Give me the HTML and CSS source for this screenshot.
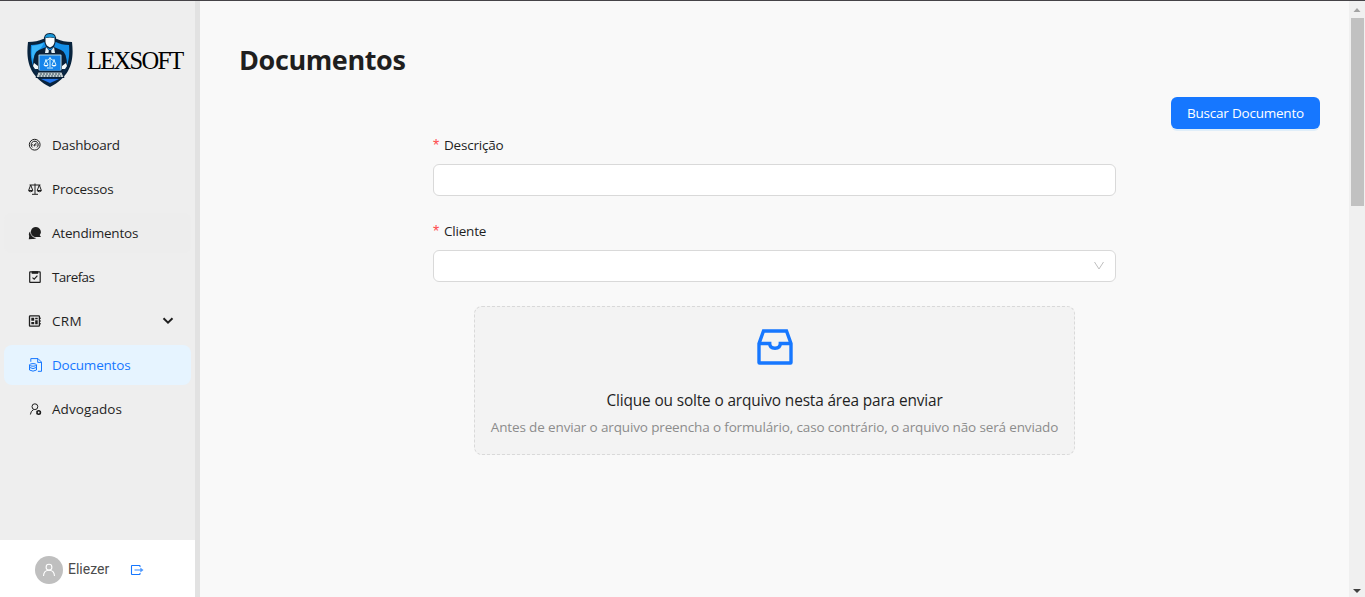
FILE: index.html
```
<!DOCTYPE html>
<html lang="pt-BR">
<head>
<meta charset="utf-8">
<title>Lexsoft - Documentos</title>
<link rel="stylesheet" href="styles.css">
</head>
<body>
<div class="app">
  <aside class="sidebar">
    <div class="brand">
      <svg class="brand-logo" viewBox="0 0 46 54">
        <path d="M1 9Q10 9 16 6L30 6Q36 9 45 9C47 26 45 43 23 54C1 43 -1 26 1 9Z" fill="#08233d"/>
        <path d="M4 12Q12 12 17 9L29 9Q34 12 42 12C43 25 42 41 23 50C4 41 3 25 4 12Z" fill="#138ee8"/>
        <path d="M5 13Q12 12 17 10L14 15L8 20L6 29Q4 21 5 13Z" fill="#39b6fa"/>
        <path d="M5 34L41 34Q36 46 23 51Q10 46 5 34Z" fill="#0b2948"/>
        <path d="M14 46H32L23 50Z" fill="#2376ed"/>
        <path d="M6 33Q6 19 12 17L19 14L23 18L27 14L34 17Q40 19 40 33L34 38H12Z" fill="#0a2038"/>
        <path d="M19 14L23 19L27 14L28 20H18Z" fill="#e6f2f8"/>
        <path d="M22 17H24L25 22H21Z" fill="#0a2038"/>
        <path d="M17 8Q16 0 23 0Q30 0 29 8L27 14L23 16L19 14Z" fill="#0a2038"/>
        <path d="M18.500 5Q23 4 27.500 5V9Q27 13 23 14.500Q19 13 18.500 9Z" fill="#f7fbfd"/>
        <path d="M18 5Q18 1 23 1Q28 1 28 5Q23 3 18 5Z" fill="#1997d8"/>
        <rect x="10" y="20" width="26" height="19" rx="2" fill="#0a2038"/>
        <rect x="11.500" y="21.500" width="23" height="16" rx="1" fill="#b2d8e9"/>
        <rect x="12.500" y="22.500" width="21" height="15" fill="#1684ea"/>
        <path d="M23 24V34M18 27Q21 28 23 25Q25 28 28 27M19 27L17 32M19 27L21 32M27 27L25 32M27 27L29 32M20 35H26" fill="none" stroke="#d6f4ff" stroke-width="1"/>
        <path d="M16.500 32H21.500Q19 35 16.500 32ZM24.500 32H29.500Q27 35 24.500 32Z" fill="#fff"/>
        <path d="M7 30L11 33L11 36L8 36L6 33ZM39 30L35 33V36H38L40 33Z" fill="#f4f8f9"/>
        <path d="M11 39H35L37 44.500H9Z" fill="#c4cfd2" stroke="#0a2038"/>
        <path d="M13 41H33M12 43H34" stroke="#344c5b" stroke-dasharray="2 1"/>
      </svg>
      <span class="brand-name">LEXSOFT</span>
    </div>
    <nav class="menu">
      <a class="item"><svg class="icon" viewBox="0 0 14 14"><circle cx="6.700" cy="6.700" r="5.400"/><path d="M4.500 9.400A3.500 3.500 0 1 1 8.900 9.400M6.500 7.300L8.300 4.900M4.200 6.800H5M6.700 3.300V4M8.600 7H9.300"/><circle cx="6.500" cy="7.300" r=".6"/></svg><span class="text">Dashboard</span></a>
      <a class="item"><svg class="icon" viewBox="0 0 14 14"><path d="M1.500 3H12.500M7 1.500V12M4 12.300H10M2.700 3L.6 8.500H4.800ZM11.300 3L9.200 8.500H13.400ZM.7 9Q2.700 10.500 4.700 9M9.300 9Q11.300 10.500 13.300 9"/></svg><span class="text">Processos</span></a>
      <a class="item hovered"><svg class="icon solid" viewBox="0 0 14 14"><path d="M8 1A5 5 0 1 1 5.500 10.400A5 5 0 0 1 8 1ZM11 8L13 11H8ZM2.200 5.500A6 6 0 0 0 8.300 11.900A4.200 4.200 0 0 1 4.500 12.900L.8 13.200L1.200 10A4 4 0 0 1 2.200 5.500Z"/></svg><span class="text">Atendimentos</span></a>
      <a class="item"><svg class="icon" viewBox="0 0 14 14"><rect x="1.700" y="1.900" width="10.500" height="10.500" rx=".5" stroke-width="1.200"/><path d="M3.700 2.500H10.200" stroke-width="2.600"/><path d="M4.500 7.600L6.200 9.100L9.400 5.700" stroke-width="1.200"/></svg><span class="text tight">Tarefas</span></a>
      <a class="item"><svg class="icon" viewBox="0 0 14 14"><rect x="1.500" y="1.900" width="9.900" height="10.300" rx=".7" stroke-width="1.300"/><path d="M11.500 4.200H13M11.500 7H13M11.500 9.800H13"/><path d="M3.300 3.800H6.200V6.800H3.300ZM7.200 3.800H9.700V5.300H7.200ZM3.300 7.900H6.200V10.200H3.300ZM7.200 6.300H9.700V10.200H7.200Z" fill="currentColor" stroke="none"/></svg><span class="text wide">CRM</span>
        <svg class="caret" viewBox="0 0 12 12"><path d="M1.500 3.200L6 7.600L10.500 3.200"/></svg></a>
      <a class="item active"><svg class="icon" viewBox="0 0 14 14"><path d="M2.800 3.800V.6H10L13.500 4.100V13.300H9.900M9.700 .6V4.400H13.500"/><ellipse cx="5" cy="6.900" rx="3.500" ry="1.300"/><path d="M1.500 7V12Q5 14.300 8.500 12V7M1.500 9.400Q5 11.800 8.500 9.400"/></svg><span class="text">Documentos</span></a>
      <a class="item"><svg class="icon" viewBox="0 0 14 14"><circle cx="6.900" cy="4.700" r="2.900"/><path d="M2.400 12.500Q2.700 9 5.600 7.600"/><circle cx="10.700" cy="10.500" r="1.700" stroke-width="1.600"/><path d="M10.700 8V9M10.700 12V13M8.500 9.300L9.400 9.800M12 11.200L12.900 11.700M12.900 9.300L12 9.800M9.400 11.200L8.500 11.700"/></svg><span class="text loose">Advogados</span></a>
    </nav>
    <div class="user">
      <span class="avatar"><svg viewBox="0 0 14 14"><circle cx="7" cy="4.200" r="2.900"/><path d="M1.500 13Q1.800 7.200 7 7.200Q12.200 7.200 12.500 13"/></svg></span>
      <span class="user-name">Eliezer</span>
      <svg class="logout" viewBox="0 0 14 14"><path d="M10 4V3Q10 2.500 9.500 2.500H2Q1.500 2.500 1.500 3V11Q1.500 11.500 2 11.500H9.500Q10 11.500 10 11V10"/><path d="M4.500 7H11" opacity=".8"/><path d="M10.300 4.500L13.500 7L10.300 9.500Z" class="tip"/></svg>
    </div>
  </aside>
  <main class="content">
    <h1 class="title">Documentos</h1>
    <div class="toolbar"><button class="primary">Buscar Documento</button></div>
    <form class="form">
      <label class="label"><span class="required">*</span><span class="text">Descrição</span></label>
      <div class="field"></div>
      <label class="label second"><span class="required">*</span><span class="text">Cliente</span></label>
      <div class="field select"><svg viewBox="0 0 12 12"><path d="M1.500 2L6 9L10.500 2"/></svg></div>
      <div class="dropzone">
        <svg class="inbox" viewBox="0 0 36 36"><path d="M2 14.500L6.500 2H29.500L34 14.500V33.500Q34 34 33.500 34H2.500Q2 34 2 33.500ZM2 14.500H12.700Q12.700 19.200 18 19.200Q23.300 19.200 23.300 14.500H34"/></svg>
        <p class="drop-text">Clique ou solte o arquivo nesta área para enviar</p>
        <p class="drop-hint">Antes de enviar o arquivo preencha o formulário, caso contrário, o arquivo não será enviado</p>
      </div>
    </form>
  </main>
  <div class="scrollbar">
    <svg class="arrow dim" viewBox="0 0 16 16"><path d="M4.500 11H11.500L8 7Z"/></svg>
    <div class="thumb"></div>
    <svg class="arrow bottom" viewBox="0 0 16 16"><path d="M4 8H12L8 12Z"/></svg>
  </div>
</div>
</body>
</html>
```
FILE: styles.css
```
* { box-sizing: border-box; }
body { margin: 0; overflow: hidden; font-family: "Open Sans", "Noto Sans", sans-serif; font-size: 13.5px; color: #1f1f1f; }
.app { display: flex; height: 597px; border-top: 1px solid #454347; background: #f9f9f9; }
.sidebar { display: flex; flex-direction: column; width: 200px; flex: none; background: #eeeeee; border-right: 5px solid #e2e2e2; }
.brand { display: flex; align-items: center; height: 120px; padding-left: 27px; gap: 14px; }
.brand-logo { width: 46px; height: 54px; flex: none; margin-bottom: 2px; }
.brand-name { font-family: "Liberation Serif", serif; font-size: 24.5px; letter-spacing: -1.7px; color: #000; white-space: nowrap; }
.menu { display: flex; flex-direction: column; gap: 4px; padding: 4px 4px 0; }
.item { display: flex; align-items: center; width: 187px; height: 40px; padding: 0 17px 0 24px; gap: 10px; border-radius: 8px; }
.text { padding-bottom: 1px; letter-spacing: -.2px; }
.tight { letter-spacing: -.6px; }
.wide { letter-spacing: .3px; }
.loose { letter-spacing: .08px; }
.icon { width: 14px; height: 14px; flex: none; fill: none; stroke: currentColor; stroke-width: 1; }
.icon.solid { fill: currentColor; stroke: none; }
.hovered { background: #ededed; }
.active { color: #1677ff; background: #e6f4ff; }
.caret { width: 12px; height: 12px; margin-left: auto; fill: none; stroke: #1f1f1f; stroke-width: 2; }
.user { display: flex; align-items: center; height: 57px; margin-top: auto; padding: 2px 0 0 35px; background: #fff; }
.avatar { display: flex; align-items: center; justify-content: center; width: 28px; height: 28px; border-radius: 50%; background: #bfbfbf; }
.avatar svg { width: 14px; height: 14px; fill: none; stroke: #fff; stroke-width: 1.1; }
.user-name { margin-left: 5px; width: 62px; padding-bottom: 2px; font-family: Roboto, sans-serif; font-size: 14px; color: #4b4b4b; }
.logout { width: 14px; height: 14px; fill: none; stroke: #1677ff; stroke-width: 1.1; }
.logout .tip { fill: #4c98ff; stroke: none; }
.content { flex: 1; padding: 39px 29px 0 39px; }
.title { margin: 0; height: 40px; line-height: 40px; font-size: 27px; font-weight: 700; letter-spacing: -.4px; }
.toolbar { display: flex; justify-content: flex-end; margin-top: 17px; }
.primary { width: 149px; height: 32px; padding: 0 0 1px; border: 0; border-radius: 6px; background: #1677ff; box-shadow: 0 2px 0 rgba(5, 145, 255, .1); color: #fff; font: inherit; letter-spacing: -.22px; white-space: nowrap; }
.form { width: 683px; margin-left: 194px; padding-top: 5px; }
.label { display: flex; align-items: center; height: 22px; gap: 4px; }
.label.second { margin-top: 24px; }
.required { width: 7px; padding-top: 2px; color: #ff4d4f; font-family: "Liberation Sans", sans-serif; font-size: 16px; }
.field { height: 32px; margin-top: 8px; border: 1px solid #d9d9d9; border-radius: 6px; background: #fff; }
.select { display: flex; align-items: center; justify-content: flex-end; padding-right: 10px; }
.select svg { width: 12px; height: 12px; fill: none; stroke: #bfbfbf; stroke-width: 1; }
.dropzone { display: flex; flex-direction: column; align-items: center; width: 601px; height: 149px; margin: 24px 41px 0; padding-top: 22px; border: 1px dashed #d9d9d9; border-radius: 8px; background: #f3f3f3; }
.inbox { width: 36px; height: 36px; fill: none; stroke: #1677ff; stroke-width: 3.400; }
.drop-text { margin: 24px 0 3px; line-height: 24px; font-size: 15.4px; letter-spacing: -.14px; white-space: nowrap; }
.drop-hint { margin: 0; line-height: 22px; letter-spacing: -.14px; color: #8c8c8c; white-space: nowrap; }
.scrollbar { display: flex; flex-direction: column; width: 16px; background: #f0f0f0; }
.arrow { width: 16px; height: 16px; flex: none; fill: #404040; }
.dim { fill: #a3a3a3; }
.bottom { margin-top: auto; }
.thumb { width: 13px; height: 188px; margin: 1px 0 0 2px; background: #c1c1c1; }
```
